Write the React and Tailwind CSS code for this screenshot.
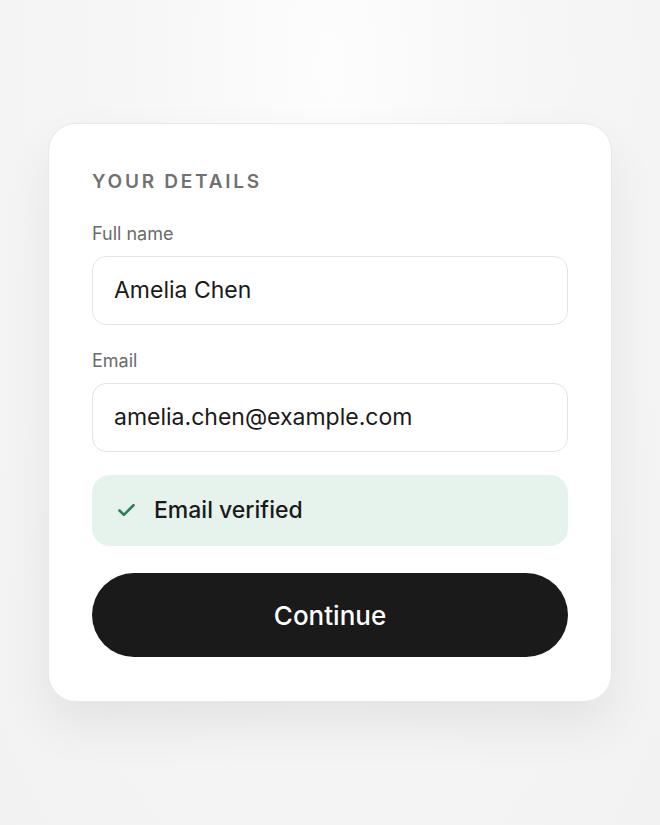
import { Check } from "lucide-react";

export default function App() {
  return (
    <div
      className="min-h-screen w-full bg-[#f4f4f4] bg-[radial-gradient(ellipse_at_50%_8%,#fdfdfd_0%,#f6f6f6_45%,#f2f2f2_100%)] pt-[123px]"
      style={{ fontFamily: "Inter, 'Noto Sans', sans-serif" }}
    >
      <div className="mx-auto w-[564px] rounded-[28px] border border-[#e8e8e8] bg-white px-[43px] pt-[44px] pb-[44px] shadow-[0_24px_50px_rgba(0,0,0,0.07)]">
        <h2 className="text-[19px] leading-[28px] font-semibold tracking-[0.145em] text-[#717171]">
          YOUR DETAILS
        </h2>

        <label className="mt-[26px] block text-[18px] leading-[24px] text-[#6b6b6b]">
          Full name
        </label>
        <div className="mt-[10px] flex h-[69px] items-center rounded-[14px] border border-[#e4e4e4] px-[21px] text-[23px] text-[#1a1a1a]">
          Amelia Chen
        </div>

        <label className="mt-[24px] block text-[18px] leading-[24px] text-[#6b6b6b]">
          Email
        </label>
        <div className="mt-[10px] flex h-[69px] items-center rounded-[14px] border border-[#e4e4e4] px-[21px] text-[23px] text-[#1a1a1a]">
          amelia.chen@example.com
        </div>

        <div className="mt-[23px] flex h-[71px] items-center gap-[17px] rounded-[18px] bg-[#e6f3ec] px-[24px]">
          <Check size={21} strokeWidth={3} className="text-[#2b8057]" />
          <span className="text-[23px] font-medium text-[#1a1a1a]">Email verified</span>
        </div>

        <button className="mt-[27px] flex h-[84px] w-full items-center justify-center rounded-full bg-[#1a1a1a] text-[26px] font-medium text-white">
          Continue
        </button>
      </div>
    </div>
  );
}
